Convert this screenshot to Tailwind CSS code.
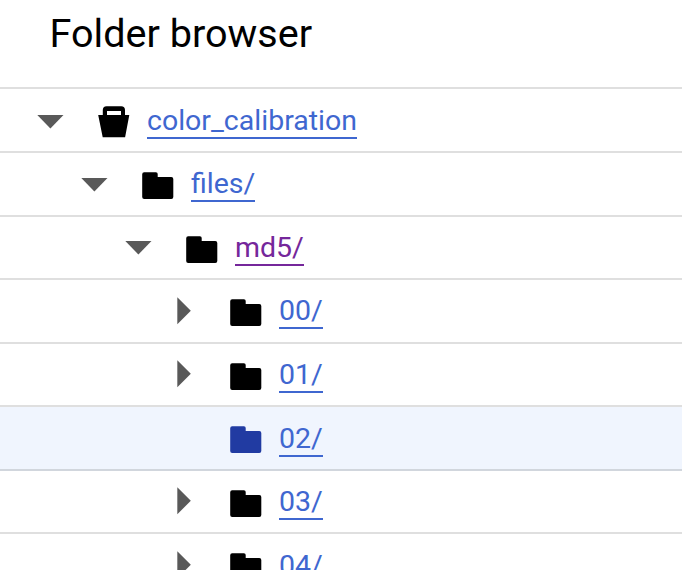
<!DOCTYPE html>
<html lang="en">
<head>
<meta charset="utf-8">
<title>Folder browser</title>
<script src="https://cdn.jsdelivr.net/npm/@tailwindcss/browser@4"></script>
</head>
<body class="h-[570px] w-[682px] overflow-hidden bg-white font-[Roboto,sans-serif] text-black">
<svg class="hidden">
  <symbol id="down" viewBox="0 0 28 14"><path d="M1.3 0h26.2L14.4 13.6z" fill="#595959"/></symbol>
  <symbol id="right" viewBox="0 0 14 28"><path d="M.3.3v26.9L13.8 13.8z" fill="#595959"/></symbol>
  <symbol id="folder" viewBox="0 0 32 28"><path d="M2.2.3h11.7q1.8 0 1.8 1.8v2.9h13.6q2 0 2 2v18q0 2-2 2H2.2q-2 0-2-2V2.3q0-2 2-2z" fill="currentColor"/></symbol>
</svg>
<main class="flex h-[570px] flex-col overflow-hidden">
  <h1 class="h-[87px] shrink-0 pl-[49.5px] pt-[11px] text-[39.6px] leading-[46px]">Folder browser</h1>
  <ul class="text-[28.5px] leading-[33px] text-[#3f67d0]">
    <li class="flex h-[64px] items-start border-t-2 border-[#dfdfdf] pl-[36px]">
      <svg class="mt-[26px] h-[14px] w-[28px]"><use href="#down"/></svg>
      <svg class="ml-[34px] mt-[17px] h-[32px] w-[32px] text-black" viewBox="0 0 32 32"><path fill-rule="evenodd" d="M4.8 9V4q0-3.8 3.8-3.8h14.6Q27 .2 27 4v5h4.3l-4.2 22.2H4.7L.2 9zM9 5v4h14V5z" fill="currentColor"/></svg>
      <a class="ml-[17px] mt-[15px] border-b-2 border-current">color_calibration</a>
    </li>
    <li class="flex h-[64px] items-start border-t-2 border-[#dfdfdf] pl-[80px]">
      <svg class="mt-[25px] h-[14px] w-[28px]"><use href="#down"/></svg>
      <svg class="ml-[34px] mt-[19px] h-[28px] w-[32px] text-black"><use href="#folder"/></svg>
      <a class="ml-[17px] mt-[14px] border-b-2 border-current">files/</a>
    </li>
    <li class="flex h-[63px] items-start border-t-2 border-[#dfdfdf] pl-[124px]">
      <svg class="mt-[24px] h-[14px] w-[28px]"><use href="#down"/></svg>
      <svg class="ml-[34px] mt-[19px] h-[28px] w-[32px] text-black"><use href="#folder"/></svg>
      <a class="ml-[17px] mt-[14px] border-b-2 border-current text-[#75279b]">md5/</a>
    </li>
    <li class="flex h-[64px] items-start border-t-2 border-[#dfdfdf] pl-[177px]">
      <svg class="mt-[17px] h-[28px] w-[14px]"><use href="#right"/></svg>
      <svg class="ml-[39px] mt-[19px] h-[28px] w-[32px] text-black"><use href="#folder"/></svg>
      <a class="ml-[17px] mt-[14px] border-b-2 border-current">00/</a>
    </li>
    <li class="flex h-[63px] items-start border-t-2 border-[#dfdfdf] pl-[177px]">
      <svg class="mt-[16px] h-[28px] w-[14px]"><use href="#right"/></svg>
      <svg class="ml-[39px] mt-[19px] h-[28px] w-[32px] text-black"><use href="#folder"/></svg>
      <a class="ml-[17px] mt-[14px] border-b-2 border-current">01/</a>
    </li>
    <li class="flex h-[64px] items-start border-t-2 border-[#dfdfdf] bg-[#f0f5fe] pl-[230px]">
      <svg class="mt-[19px] h-[28px] w-[32px] text-[#213ba2]"><use href="#folder"/></svg>
      <a class="ml-[17px] mt-[15px] border-b-2 border-current">02/</a>
    </li>
    <li class="flex h-[63px] items-start border-t-2 border-[#d1d6dd] pl-[177px]">
      <svg class="mt-[16px] h-[28px] w-[14px]"><use href="#right"/></svg>
      <svg class="ml-[39px] mt-[19px] h-[28px] w-[32px] text-black"><use href="#folder"/></svg>
      <a class="ml-[17px] mt-[14px] border-b-2 border-current">03/</a>
    </li>
    <li class="flex h-[64px] items-start border-t-2 border-[#dfdfdf] pl-[177px]">
      <svg class="mt-[17px] h-[28px] w-[14px]"><use href="#right"/></svg>
      <svg class="ml-[39px] mt-[19px] h-[28px] w-[32px] text-black"><use href="#folder"/></svg>
      <a class="ml-[17px] mt-[15px] border-b-2 border-current">04/</a>
    </li>
  </ul>
</main>
</body>
</html>
